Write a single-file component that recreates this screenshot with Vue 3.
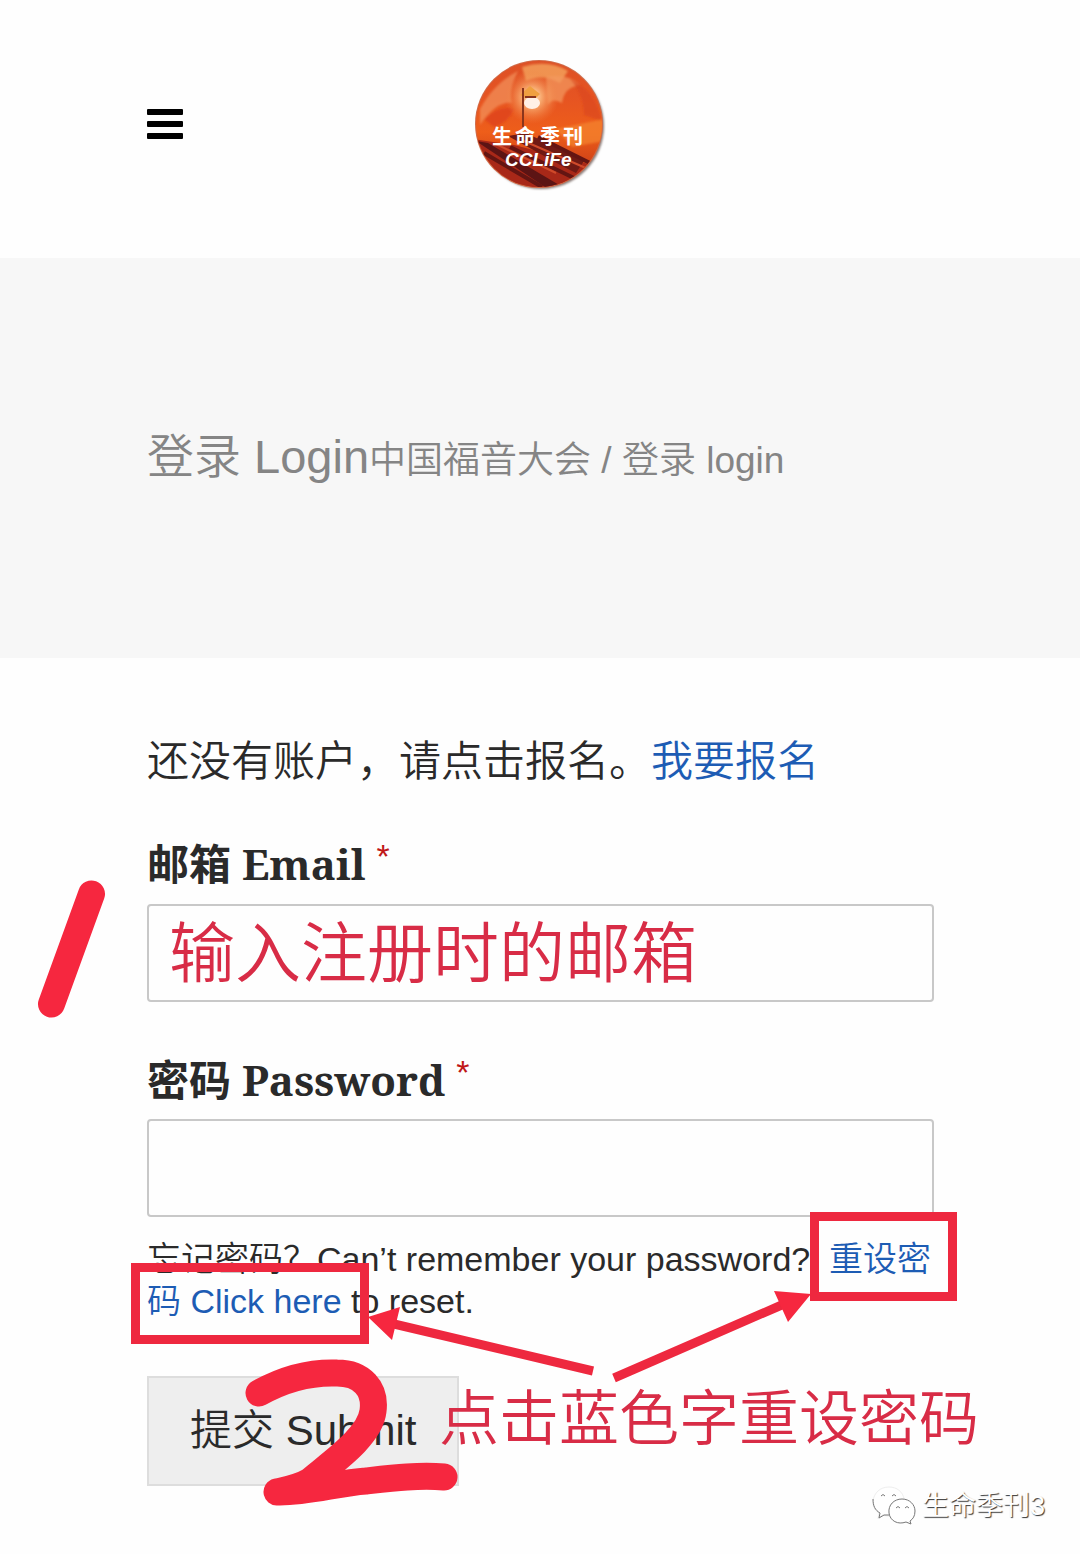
<script setup>
import { ref } from 'vue'

const email = ref('输入注册时的邮箱')
const password = ref('')
</script>

<template>
  <div class="page">
    <header class="site-header">
      <button class="menu" type="button" aria-label="Menu">
        <span></span><span></span><span></span>
      </button>
      <a class="logo" href="#" aria-label="生命季刊 CCLiFe">
        <svg width="136" height="136" viewBox="0 0 136 136">
          <defs>
            <linearGradient id="sky" x1="0" y1="0" x2="0" y2="1">
              <stop offset="0" stop-color="#dc5026" />
              <stop offset="0.3" stop-color="#e65422" />
              <stop offset="0.55" stop-color="#ee5e1a" />
              <stop offset="0.72" stop-color="#d84a18" />
              <stop offset="1" stop-color="#b02c14" />
            </linearGradient>
            <radialGradient id="glow">
              <stop offset="0" stop-color="#fff3dc" />
              <stop offset="0.35" stop-color="#fbb87c" stop-opacity="0.85" />
              <stop offset="1" stop-color="#f08040" stop-opacity="0" />
            </radialGradient>
            <filter id="soft" x="-20%" y="-20%" width="140%" height="140%">
              <feGaussianBlur stdDeviation="1.3" />
            </filter>
            <clipPath id="disc"><circle cx="67" cy="67" r="63" /></clipPath>
          </defs>
          <circle cx="69" cy="69" r="63" fill="#8a7a76" filter="url(#soft)" />
          <circle cx="67" cy="67" r="64" fill="#cf6a48" />
          <g clip-path="url(#disc)">
            <rect width="136" height="136" fill="url(#sky)" />
            <g filter="url(#soft)">
              <path d="M8 52Q22 26 46 14Q36 34 40 46Q24 44 8 68Z" fill="#f2925c" opacity="0.7" />
              <path d="M50 10Q76 2 96 14L88 26Q70 16 54 24Z" fill="#f6a860" opacity="0.75" />
              <path d="M74 20Q96 16 108 28Q92 30 90 46Q80 40 76 48Z" fill="#f39a60" opacity="0.7" />
              <path d="M98 22Q124 34 130 64L112 58Q112 38 98 22Z" fill="#d9421c" opacity="0.6" />
              <path d="M12 62Q28 48 42 52Q36 66 22 70Z" fill="#dd3f1c" opacity="0.7" />
              <path d="M84 72L132 62V84L100 90Z" fill="#f5842c" opacity="0.7" />
            </g>
            <circle cx="60" cy="40" r="27" fill="url(#glow)" />
            <path d="M48 38L58 29L68 37L64 41H53Z" fill="#f0a040" />
            <ellipse cx="60" cy="46" rx="8" ry="6" fill="#fff0e6" />
            <path d="M51 31V70M53 40H64" stroke="#8a351c" stroke-width="2" />
            <path d="M0 82L42 88L136 112V136H40Z" fill="#a82818" />
            <path d="M4 84L16 86L94 132L82 136Z" fill="#5c1414" />
            <path d="M36 79L54 76L112 104L104 116L92 110Z" fill="#701a14" />
            <path d="M12 96L70 130M38 90L104 122M66 80L122 108" stroke="#641512" stroke-width="4" />
            <path d="M24 87L84 116M52 84L116 112" stroke="#cf4a2a" stroke-width="2" />
          </g>
          <text class="logo-cn" x="20 43 68 91" y="87">生命季刊</text>
          <text class="logo-en" x="33" y="109">CCLiFe</text>
        </svg>
      </a>
    </header>

    <section class="banner">
      <h1>登录 Login</h1>
      <nav class="crumbs" aria-label="Breadcrumb">
        <a href="#">中国福音大会</a> / <span>登录 login</span>
      </nav>
    </section>

    <main>
      <p class="intro">还没有账户，请点击报名。<a href="#">我要报名</a></p>
      <form @submit.prevent>
        <div class="field">
          <label for="email">邮箱 Email <span class="required">*</span></label>
          <input id="email" v-model="email" type="text" />
        </div>
        <div class="field">
          <label for="password">密码 Password <span class="required">*</span></label>
          <input id="password" v-model="password" type="password" />
        </div>
        <p class="help">忘记密码？Can’t remember your password?&nbsp; <a href="#">重设密码 Click here</a> to reset.</p>
        <button class="submit" type="submit">提交 Submit</button>
      </form>
    </main>

    <svg class="marks" width="1080" height="1554" viewBox="0 0 1080 1554" aria-hidden="true">
      <g fill="none" stroke="#f6273f">
        <path d="M91.500 894L51.500 1004" stroke-width="27" stroke-linecap="round" />
        <path
          d="M259 1393C282 1380 310 1372 337 1373C362 1373 376 1389 373 1411C370 1437 331 1463 310 1481C300 1487 290 1489 277 1492C306 1493 337 1483 366 1481C393 1478 418 1475 444 1477"
          stroke-width="27"
          stroke-linecap="round"
          stroke-linejoin="round"
        />
        <g stroke="#ee283f" stroke-width="9">
          <rect x="135.500" y="1267.500" width="229" height="72" />
          <rect x="814.500" y="1216.500" width="138" height="80" />
          <path d="M593 1371L394 1324M614 1378L784 1304" />
        </g>
      </g>
      <path d="M368 1317L400 1307L392 1340ZM811 1294L774 1291L788 1322Z" fill="#f6273f" />
    </svg>
    <p class="note">点击蓝色字重设密码</p>

    <div class="watermark">
      <svg width="46" height="42" viewBox="0 0 46 42" fill="#fff" stroke="#777" stroke-width="1">
        <path d="M10 30L6 34L7 28C2 25 1 21 1 16C2 8 8 2 17 2C25 2 31 7 32 14L30 28C24 31 17 32 10 30Z" stroke="#eee" />
        <path d="M1 14C1 21 3 25 8 28L7 33L12 30L17 30" fill="none" />
        <path d="M9 11Q11 8 13 11M20 11Q22 8 24 11" fill="none" />
        <path d="M17 28C16 20 22 14 30 14C38 14 43 20 43 26C43 31 41 34 38 36L39 39L34 37C26 40 18 36 17 28Z" />
        <path d="M24 23Q26 20 28 23M33 23Q35 20 37 23" fill="none" />
      </svg>
      <span>生命季刊3</span>
    </div>
  </div>
</template>

<style>
body {
  background: #fefefe;
}
</style>

<style scoped>
.page {
  position: relative;
  overflow: hidden;
  background: #fefefe;
  color: #2a2a2a;
  font-family: "Liberation Sans", "Noto Sans CJK SC", sans-serif;
  font-weight: 350;
}
a {
  color: #1d5cb4;
  text-decoration: none;
}
.site-header {
  display: grid;
  grid-template-columns: 1fr auto 1fr;
  align-items: start;
  height: 258px;
  padding: 57px 147px 0;
  box-sizing: border-box;
}
.menu {
  display: flex;
  flex-direction: column;
  gap: 6px;
  width: 36px;
  margin-top: 52px;
  padding: 0;
  border: 0;
  background: none;
}
.menu span {
  height: 6px;
  border-radius: 1px;
  background: #000;
}
.logo {
  display: block;
  height: 136px;
}
.logo-cn,
.logo-en {
  fill: #fff;
  font-weight: 700;
}
.logo-cn {
  font-family: "Noto Sans CJK SC", sans-serif;
  font-size: 20px;
}
.logo-en {
  font-size: 19px;
  font-style: italic;
}
.banner {
  display: flex;
  align-items: baseline;
  height: 400px;
  padding: 164px 147px 0;
  box-sizing: border-box;
  background: #f7f7f7;
  color: #858585;
  line-height: 70px;
}
.banner h1 {
  margin: 0;
  font-size: 47px;
  font-weight: 350;
}
.crumbs {
  font-size: 37px;
}
.crumbs a {
  color: inherit;
}
main {
  padding: 73px 146px 68px 147px;
}
.intro {
  margin: 0 0 40px;
  font-size: 42px;
  line-height: 62px;
}
.field {
  margin-bottom: 47px;
}
.field label {
  display: block;
  height: 62px;
  margin-bottom: 9px;
  font: 700 42px/62px "Noto Serif", "DejaVu Serif Condensed", "Noto Sans CJK SC", serif;
}
.field + .field label {
  margin-bottom: 8px;
}
.required {
  color: #c01818;
  font: 400 34px/34px "Liberation Sans", sans-serif;
  vertical-align: 12px;
}
.field input {
  display: block;
  width: 100%;
  height: 98px;
  box-sizing: border-box;
  padding: 0 20px 10px;
  border: 2px solid #c8c8c8;
  border-radius: 4px;
  outline: 0;
  background: #fefefe;
  color: #d82c46;
  font: 350 66px/84px "Noto Sans CJK SC", sans-serif;
}
.help {
  margin: -26px 0 54px;
  font-size: 34px;
  line-height: 42px;
}
.submit {
  display: block;
  height: 110px;
  padding: 0 41px 10px;
  border: 2px solid #ddd;
  background: #eee;
  color: #2a2a2a;
  font: 350 42px "Liberation Sans", "Noto Sans CJK SC", sans-serif;
}
.marks {
  position: absolute;
  top: 0;
  left: 0;
  pointer-events: none;
}
.note {
  position: absolute;
  top: 1376px;
  left: 439px;
  margin: 0;
  color: #d82c46;
  font-size: 60px;
  line-height: 88px;
  white-space: nowrap;
}
.watermark {
  position: absolute;
  right: 35px;
  bottom: 27px;
  display: flex;
  align-items: center;
  gap: 4px;
  color: #fff;
  font-size: 27px;
  line-height: 42px;
  text-shadow: 1px 1px 1px #333;
}
</style>
